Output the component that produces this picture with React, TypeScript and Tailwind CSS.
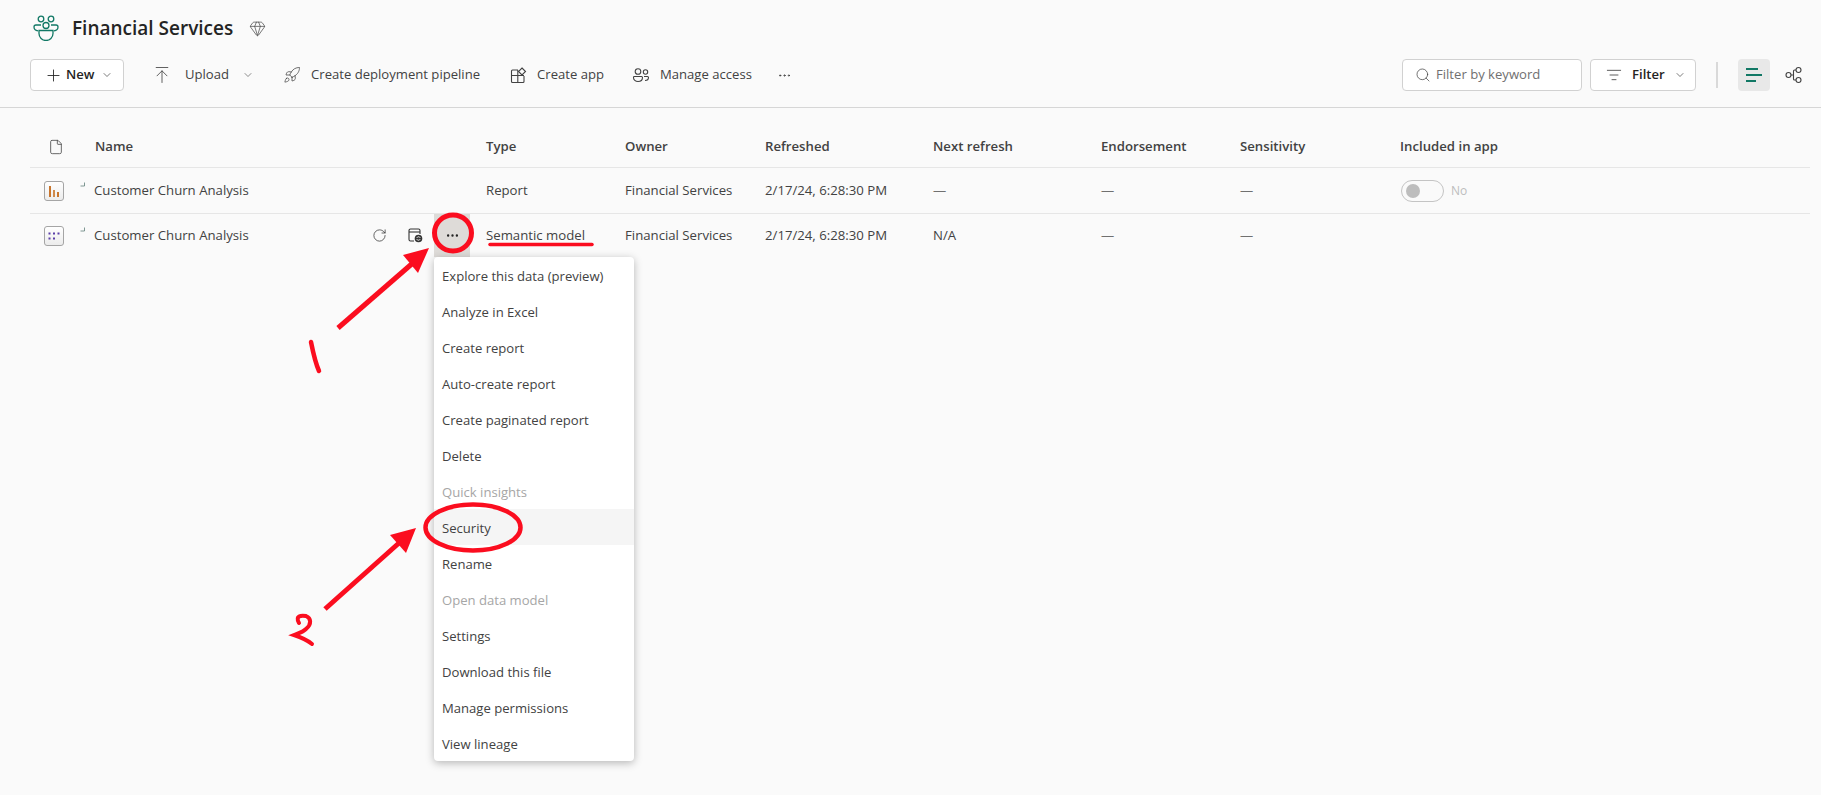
import { ChevronDown, File, Gem, ListFilter, MoreHorizontal, Plus, Rocket, RotateCw, Search, ArrowUpToLine } from 'lucide-react';

const columns = 'grid grid-cols-[64px_392px_139px_140px_168px_168px_139px_160px_1fr]';

const menuItems = [
  { label: 'Explore this data (preview)' },
  { label: 'Analyze in Excel' },
  { label: 'Create report' },
  { label: 'Auto-create report' },
  { label: 'Create paginated report' },
  { label: 'Delete' },
  { label: 'Quick insights', disabled: true },
  { label: 'Security', active: true },
  { label: 'Rename' },
  { label: 'Open data model', disabled: true },
  { label: 'Settings' },
  { label: 'Download this file' },
  { label: 'Manage permissions' },
  { label: 'View lineage' },
];

function WorkspaceLogo() {
  return (
    <svg width="26" height="26" viewBox="0 0 26 26" fill="none" stroke="#117865" strokeWidth="1.3">
      <circle cx="8" cy="4" r="2.8" />
      <circle cx="18" cy="4" r="2.8" />
      <circle cx="13" cy="10.5" r="3" />
      <path d="M8 10H3a2 2 0 0 0-2 2c0 2 1.500 3.500 4 3.800" />
      <path d="M18 10h5a2 2 0 0 1 2 2c0 2-1.500 3.500-4 3.800" />
      <path d="M6 15.500h14v3a7 7 0 0 1-14 0z" />
    </svg>
  );
}

function CreateAppIcon() {
  return (
    <svg width="17" height="17" viewBox="0 0 17 17" fill="none" stroke="#424242" strokeWidth="1.1">
      <path d="M8 3H2.500a1 1 0 0 0-1 1v10.500a1 1 0 0 0 1 1H13a1 1 0 0 0 1-1V9" />
      <path d="M1.500 8.500H14M7.800 3v12.500" />
      <path d="M12 1 15.500 4.500 12 8 8.500 4.500z" />
    </svg>
  );
}

function ManageAccessIcon() {
  return (
    <svg width="18" height="17" viewBox="0 0 18 17" fill="none" stroke="#424242" strokeWidth="1.1">
      <circle cx="6" cy="4.500" r="2.800" />
      <circle cx="13.500" cy="5" r="2.200" />
      <path d="M2 9.500h7.500a1 1 0 0 1 1 1c0 2.500-2 4-4.500 4s-4.500-1.500-4.500-4a1 1 0 0 1 .5-1z" />
      <path d="M12 9.500h3.500a1 1 0 0 1 1 1c0 1.800-1.300 3-3.500 3" />
    </svg>
  );
}

function ReportIcon() {
  return (
    <span className="flex h-5 w-5 items-end justify-center gap-[2px] rounded-[3px] border border-[#a5a5a5] bg-gradient-to-b from-white to-[#ececec] pb-[3px]">
      <span className="h-[11px] w-[2px] bg-[#c8752d]" />
      <span className="h-[7px] w-[2px] bg-[#d08a4a]" />
      <span className="h-[5px] w-[2px] bg-[#c8752d]" />
    </span>
  );
}

function ModelIcon() {
  return (
    <span className="flex h-5 w-5 items-center justify-center rounded-[3px] border border-[#a5a5a5] bg-gradient-to-b from-white to-[#ececec]">
      <svg width="12" height="8" viewBox="0 0 12 8" fill="#5b3fa8">
        <rect x="0.500" y="0.500" width="2" height="2" />
        <rect x="5" y="0.500" width="2" height="2" />
        <rect x="9.500" y="0.500" width="2" height="2" />
        <rect x="0.500" y="5.500" width="2" height="2" />
        <rect x="5" y="5.500" width="2" height="2" />
      </svg>
    </span>
  );
}

function ShortcutMark() {
  return (
    <svg className="mt-[-13px] ml-[16px]" width="5" height="5" viewBox="0 0 5 5" fill="none" stroke="#5f7f78" strokeWidth="0.800">
      <path d="M4.500 0.500v3.500H0.500" />
    </svg>
  );
}

function ScheduleRefreshIcon() {
  return (
    <svg width="15" height="15" viewBox="0 0 15 15" fill="none" stroke="#333" strokeWidth="1.100">
      <path d="M6 13H2.500a1.500 1.500 0 0 1-1.500-1.500v-9A1.500 1.500 0 0 1 2.500 1h8A1.500 1.500 0 0 1 12 2.500V6" />
      <path d="M1 4h11" />
      <circle cx="10.500" cy="10.500" r="3.800" fill="#333" stroke="none" />
      <path d="M12.300 9.800a2 2 0 0 0-3.500 0M8.700 11.200a2 2 0 0 0 3.500 0" stroke="#fafafa" strokeWidth="0.900" />
    </svg>
  );
}

function LineageIcon() {
  return (
    <svg width="18" height="18" viewBox="0 0 18 18" fill="none" stroke="#424242" strokeWidth="1.100">
      <circle cx="3.500" cy="9" r="2.500" />
      <circle cx="13.500" cy="4" r="2.500" />
      <circle cx="13.500" cy="14" r="2.500" />
      <path d="M6 9h2.500M11 4H9.500a1 1 0 0 0-1 1v8a1 1 0 0 0 1 1H11" />
    </svg>
  );
}

function Toolbar() {
  return (
    <div className="flex h-8 items-center pr-[18px] pl-[30px] text-[13.100px] text-[#424242]">
      <button className="flex h-8 w-[94px] items-center rounded-[4px] border border-[#d1d1d1] bg-white pl-[13px] font-semibold text-[#242424]">
        <Plus size={19} strokeWidth={1.1} />
        <span className="ml-[3px]">New</span>
        <ChevronDown size={12} strokeWidth={1.2} className="ml-[7px]" />
      </button>
      <ArrowUpToLine size={20} strokeWidth={1} className="ml-[28px]" />
      <span className="ml-[13px]">Upload</span>
      <ChevronDown size={12} strokeWidth={1.2} className="ml-[13px]" />
      <Rocket size={18} strokeWidth={1} className="ml-[29px]" />
      <span className="ml-[10px]">Create deployment pipeline</span>
      <span className="ml-[30px]"><CreateAppIcon /></span>
      <span className="ml-[10px]">Create app</span>
      <span className="ml-[28px]"><ManageAccessIcon /></span>
      <span className="ml-[10px]">Manage access</span>
      <MoreHorizontal size={15} strokeWidth={1.5} className="ml-[25px]" />

      <div className="ml-auto flex h-8 w-[180px] items-center rounded-[4px] border border-[#d1d1d1] bg-white pl-[12px] text-[#707070]">
        <Search size={16} strokeWidth={1.1} className="text-[#424242]" />
        <span className="ml-[5px]">Filter by keyword</span>
      </div>
      <button className="ml-2 flex h-8 w-[106px] items-center rounded-[4px] border border-[#d1d1d1] bg-white pl-[15px] font-semibold text-[#242424]">
        <ListFilter size={16} strokeWidth={1.1} />
        <span className="ml-[10px]">Filter</span>
        <ChevronDown size={12} strokeWidth={1.2} className="ml-[9px]" />
      </button>
      <div className="ml-[20px] h-[26px] w-[2px] bg-[#d9d9d9]" />
      <div className="ml-[20px] flex h-8 w-8 flex-col items-start justify-center gap-[4px] rounded-[4px] bg-[#e8e8e8] pl-2">
        <span className="h-[2px] w-[12px] bg-[#117865]" />
        <span className="h-[2px] w-[16px] bg-[#117865]" />
        <span className="h-[2px] w-[10px] bg-[#117865]" />
      </div>
      <span className="ml-[15px]"><LineageIcon /></span>
    </div>
  );
}

function Dash() {
  return <span className="text-[#707070]">—</span>;
}

function App() {
  return (
    <div className="relative h-[795px] w-[1821px] overflow-hidden bg-[#fafafa] font-['Open_Sans','Noto_Sans',sans-serif]">
      {/* titel */}
      <div className="flex h-[59px] items-center pl-[33px] pb-[3px]">
        <WorkspaceLogo />
        <h1 className="ml-[13px] text-[19px] font-semibold text-[#242424]">Financial Services</h1>
        <Gem size={17} strokeWidth={1} className="ml-[16px] text-[#424242]" />
      </div>
      <Toolbar />
      <div className="mt-[16px] h-px bg-[#d6d6d6]" />

      {/* lijst */}
      <div className="mr-[11px] ml-[30px] text-[13.200px] text-[#424242]">
        <div className={`${columns} h-[60px] items-center border-b border-[#e6e6e6] pt-[19px] font-semibold`}>
          <File size={16} strokeWidth={1.2} className="ml-[18px]" />
          <span className="ml-[1px]">Name</span>
          <span>Type</span>
          <span>Owner</span>
          <span>Refreshed</span>
          <span>Next refresh</span>
          <span>Endorsement</span>
          <span>Sensitivity</span>
          <span>Included in app</span>
        </div>

        <div className={`${columns} h-[46px] items-center border-b border-[#e6e6e6]`}>
          <div className="flex items-center pl-[14px]"><ReportIcon /><ShortcutMark /></div>
          <span>Customer Churn Analysis</span>
          <span>Report</span>
          <span>Financial Services</span>
          <span>2/17/24, 6:28:30 PM</span>
          <Dash />
          <Dash />
          <Dash />
          <div className="flex items-center pl-[1px]">
            <span className="flex h-[22px] w-[43px] items-center rounded-full border border-[#c4c4c4] pl-1">
              <span className="h-[14px] w-[14px] rounded-full bg-[#bdbdbd]" />
            </span>
            <span className="ml-[7px] text-[12px] text-[#bdbdbd]">No</span>
          </div>
        </div>

        <div className={`${columns} h-[43px] items-center`}>
          <div className="flex items-center pl-[14px]"><ModelIcon /><ShortcutMark /></div>
          <div className="flex h-[43px] items-center pr-4">
            <span className="pt-[1px]">Customer Churn Analysis</span>
            <RotateCw size={15} strokeWidth={1.2} className="ml-auto text-[#333]" />
            <span className="ml-[21px]"><ScheduleRefreshIcon /></span>
            <div className="relative ml-[11px] flex h-[43px] w-[36px] items-center justify-center bg-[#dedbd8] text-[#242424]">
              <MoreHorizontal size={15} strokeWidth={1.8} />
              <div className="absolute top-full left-0 z-10 w-[200px] overflow-hidden rounded-[4px] bg-white shadow-[0_2px_8px_rgba(0,0,0,0.28)]">
                {menuItems.map((item) => (
                  <div
                    key={item.label}
                    className={`flex h-9 items-center pt-[3px] pl-2 text-[13.100px] ${item.disabled ? 'text-[#a6a6a6]' : 'text-[#424242]'} ${item.active ? 'bg-[#f5f5f5]' : ''}`}
                  >
                    {item.label}
                  </div>
                ))}
              </div>
            </div>
          </div>
          <span className="pt-[1px]">Semantic model</span>
          <span className="pt-[1px]">Financial Services</span>
          <span className="pt-[1px]">2/17/24, 6:28:30 PM</span>
          <span className="pt-[1px]">N/A</span>
          <Dash />
          <Dash />
          <span />
        </div>
      </div>

      {/* rode annotaties */}
      <svg className="pointer-events-none absolute inset-0 z-20" width="1821" height="795" viewBox="0 0 1821 795" fill="none" stroke="#fb0d1f" strokeLinecap="round">
        <ellipse cx="453" cy="233" rx="18.500" ry="18" strokeWidth="5" />
        <path d="M490 244.500h102" strokeWidth="3.500" />
        <path d="M338 328 414 262" strokeWidth="5" strokeLinecap="butt" />
        <path d="M429 248 403 255 418 273z" fill="#fb0d1f" stroke="none" />
        <path d="M311 342c2 10 4 20 8 29" strokeWidth="4.500" />
        <ellipse cx="473" cy="527.500" rx="47.500" ry="23" strokeWidth="4.500" />
        <path d="M325 609 399 543" strokeWidth="5" strokeLinecap="butt" />
        <path d="M416 528 390 535 406 553z" fill="#fb0d1f" stroke="none" />
        <path d="M299 623c-4-7 2-8 7-7 5 2 6 8 0 13-3 3-7 4-12 6 6 2 12 4 18 9" strokeWidth="4" />
      </svg>
    </div>
  );
}

export default App;
